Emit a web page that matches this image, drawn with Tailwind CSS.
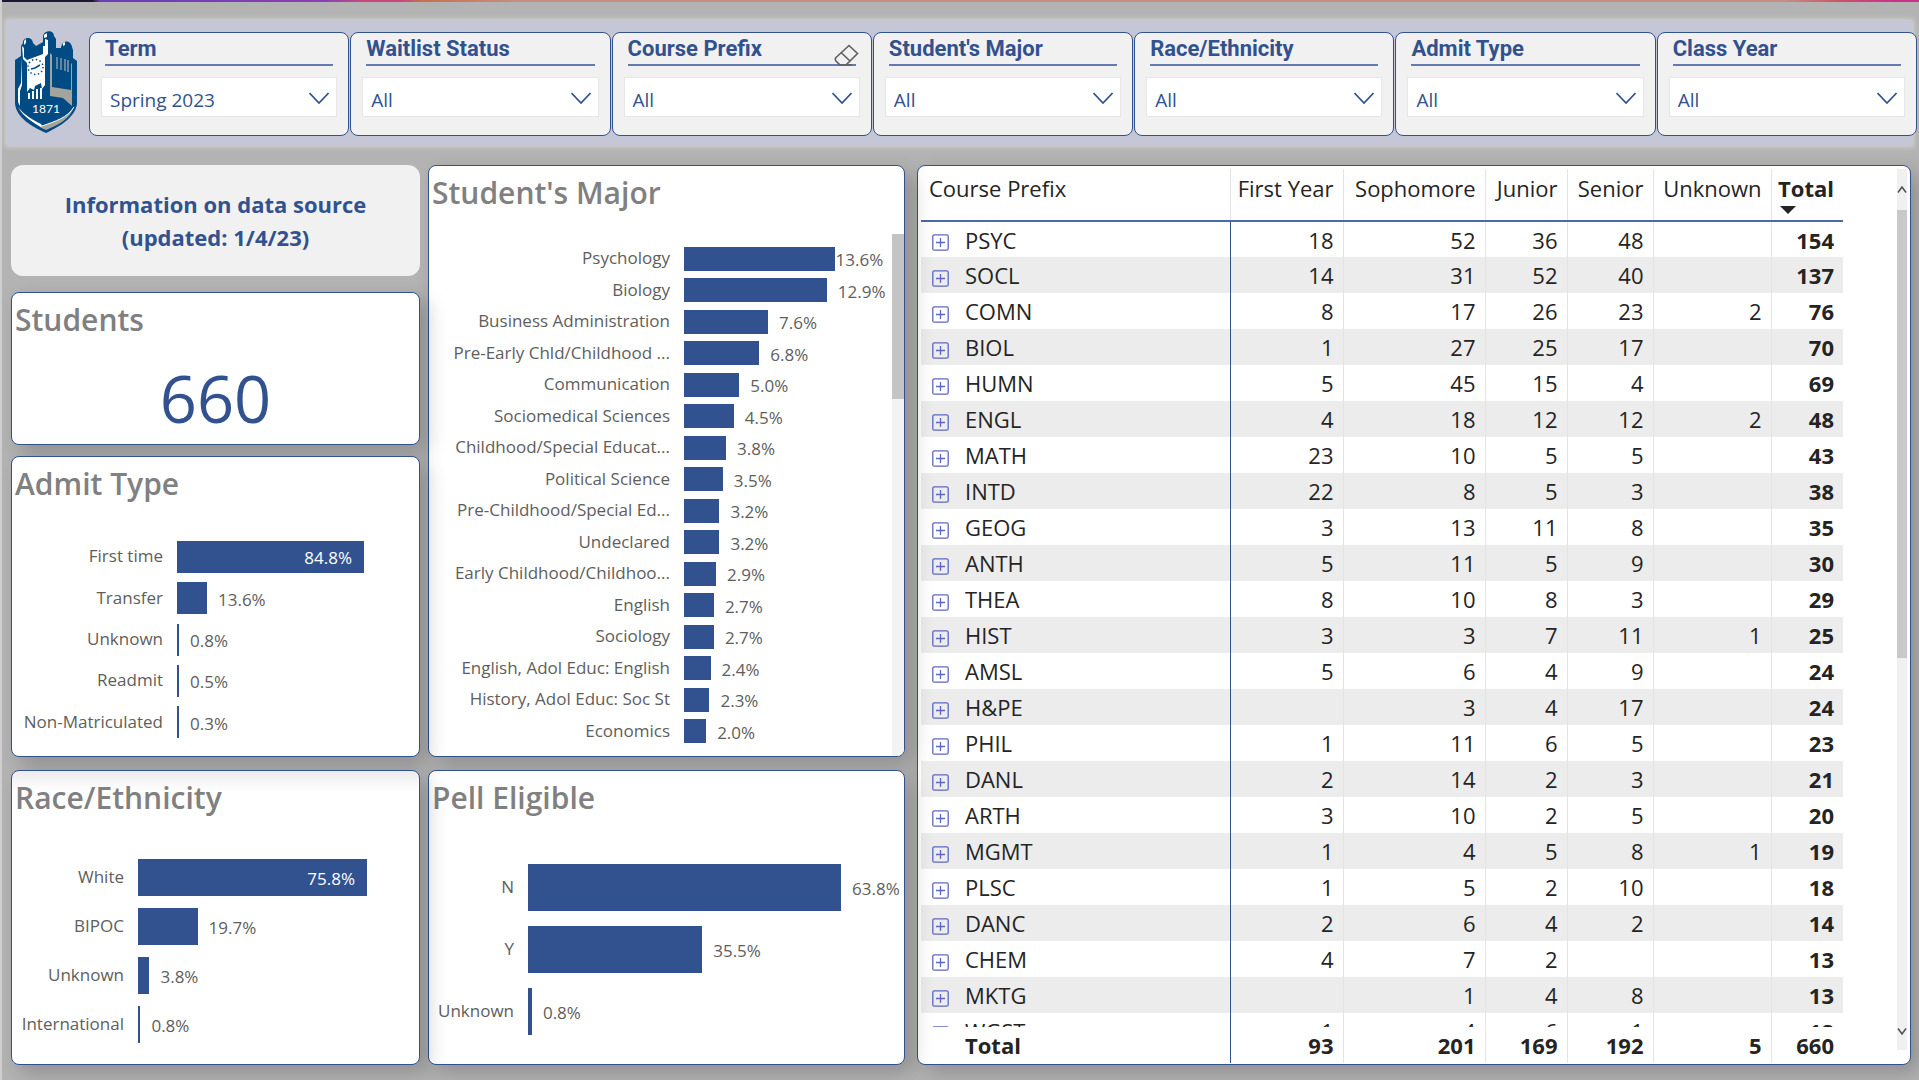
<!DOCTYPE html>
<html lang="en">
<head>
<meta charset="utf-8">
<title>Course Waitlist Dashboard</title>
<script src="https://cdn.jsdelivr.net/npm/@tailwindcss/browser@4"></script>
</head>
<body class="min-h-screen overflow-x-hidden border-l-2 border-[#cfcfcf] bg-[#b3b3b3] font-['Open_Sans','Noto_Sans',sans-serif] text-[#252423]">
<div class="-ml-[2px] h-[2px] bg-[linear-gradient(90deg,#1e1733_0_4.8%,#6a3fb5_5.2%,#8a3fb5_17%,#c8487c_18.8%,#c8487c_21%,#c8704f_22%,#c58f7e_27%,#c58f7e_93%,#c8506a_96%,#c8308c_99%)]"></div>

<header class="mt-[19px] mr-[7px] ml-[5px] flex h-[124px] bg-[#c5c6d6] shadow-[0_0_5px_2px_rgba(214,214,214,0.9)]">
  <div class="w-[82px] shrink-0 pt-[10px] pl-[7px]">
    <svg width="64" height="102" viewBox="0 0 64 102" role="img" aria-label="College logo, 1871">
      <path fill="#004b84" d="M1 29 L7 25 V15 L9 12 C8 7 18 4 19 12 L22 15 L29 11 V6 C29 -1 40 -2 40 5 L42 8 V17 L47 17 C48 8 57 9 58 16 L59 19 V27 L63 30 V73 C61 86 47 95 32 102 C17 95 3 87 1 73 Z"/>
      <path fill="#fff" d="M8 15 L10 17 V26 L13 29 L29 23 V15 L31 15 V8 L34 9 V23 L31 26 V54 L28 58 L27 52 L21 55 L20 59 L16 57 L13 61 V32 L9 28 Z"/>
      <path fill="#fff" d="M8 26 V54 L6 60 V75 L4 71 V58 L7 52 Z M10 10 L12 8 V12 L10 14 Z M30 4 L33 2 V6 L30 7 Z M49 12 L51 11 V14 L49 15 Z"/>
      <path stroke="#004b84" stroke-width="1.6" d="M16 19 V23 M19.500 18 V22 M23 17 V21 M26.500 16 V20" fill="none"/>
      <circle cx="21.500" cy="36" r="7.500" fill="none" stroke="#004b84" stroke-width="1.500" stroke-dasharray="1.500 2.430"/>
      <path d="M17 38 L21 37 L26 34" stroke="#004b84" stroke-width="1.500" fill="none"/>
      <path d="M15 62 V68 M19 60 V68 M23 58 V68 M27 57 V68" stroke="#fff" stroke-width="2" fill="none"/>
      <path d="M43 26 V38 M47 27 V39 M51 28 V40 M54 29 V41" stroke="#9aa5ad" stroke-width="1.300" fill="none"/>
      <path fill="#a3a49c" d="M36 22 L38 24 V56 L57 59 V32 L58 33 V75 L49 67 L36 65 Z"/>
      <path fill="#fff" d="M4 76 C9 86 20 92 30 98 L27 93 C19 89 10 84 4 76 Z"/>
      <path fill="#a3a49c" d="M60 76 C54 86 43 90 26 96 L32 99 C44 94 56 88 60 76 Z"/>
      <path fill="none" stroke="#fff" stroke-width="1" d="M60 76 C53 87 42 90 28 95"/>
      <text x="32" y="82" fill="#fff" font-family="Lato, sans-serif" font-size="12" text-anchor="middle">1871</text>
    </svg>
  </div>
  <div id="slicers" class="-mr-[5px] grid flex-1 grid-cols-7 gap-px pt-[11px] pb-[9px]"></div>
</header>

<main class="mt-5 mr-2 ml-[9px] grid grid-cols-[409fr_477fr_998fr] gap-2 pb-[14px]">
  <section class="relative z-20 flex flex-col">
    <button class="mb-4 h-[111px] rounded-xl bg-[#f1f1f1] text-[22px] leading-[33px] font-bold text-[#31528f]">Information on data source<br>(updated: 1/4/23)</button>
    <div class="mb-[11px] h-[153px] rounded-lg border border-[#31528f] bg-white shadow-[8px_8px_20px_rgba(0,0,0,0.2)]">
      <h2 class="px-[3px] pt-[7px] text-[30px] leading-10 font-semibold text-[#808080]">Students</h2>
      <p class="mt-[18px] text-center text-[65px] leading-[80px] text-[#31528f]">660</p>
    </div>
    <div class="mb-[13px] h-[301px] rounded-lg border border-[#31528f] bg-white shadow-[8px_8px_20px_rgba(0,0,0,0.2)]">
      <h2 class="px-[3px] pt-[7px] text-[30px] leading-10 font-semibold text-[#808080]">Admit Type</h2>
      <div id="admit" class="mt-8 flex h-[207px] flex-col"></div>
    </div>
    <div class="h-[295px] rounded-lg border border-[#31528f] bg-white bg-linear-to-b from-[#ececec] to-white to-[20px] shadow-[8px_8px_20px_rgba(0,0,0,0.2)]">
      <h2 class="px-[3px] pt-[7px] text-[30px] leading-10 font-semibold text-[#808080]">Race/Ethnicity</h2>
      <div id="race" class="mt-[35px] flex h-[196px] flex-col"></div>
    </div>
  </section>

  <section class="relative z-10 flex flex-col">
    <div class="mb-[13px] flex h-[592px] flex-col overflow-hidden rounded-lg border border-[#31528f] bg-white shadow-[8px_8px_20px_rgba(0,0,0,0.2)]">
      <h2 class="px-[3px] pt-[7px] text-[30px] leading-10 font-semibold text-[#808080]">Student's Major</h2>
      <div class="relative mt-[21px] flex-1">
        <div id="major" class="mt-[9px] flex h-[504px] flex-col"></div>
        <div class="absolute inset-y-0 right-0 w-3 bg-[#f3f3f3]"><div class="h-[165px] bg-[#c4c4c4]"></div></div>
      </div>
    </div>
    <div class="h-[295px] rounded-lg border border-[#31528f] bg-white shadow-[8px_8px_20px_rgba(0,0,0,0.2)]">
      <h2 class="px-[3px] pt-[7px] text-[30px] leading-10 font-semibold text-[#808080]">Pell Eligible</h2>
      <div id="pell" class="mt-[38px] flex h-[187px] flex-col"></div>
    </div>
  </section>

  <section class="ml-1 flex h-[900px] rounded-lg border border-[#31528f] bg-white pt-[3px] pr-[3px] pl-[3px] shadow-[8px_8px_20px_rgba(0,0,0,0.2)]">
    <div class="mr-[54px] flex flex-1 flex-col">
      <div class="h-[858px] overflow-hidden">
        <table class="w-full table-fixed text-[22px]">
          <colgroup><col><col class="w-[113px]"><col class="w-[142px]"><col class="w-[82px]"><col class="w-[86px]"><col class="w-[118px]"><col class="w-[72px]"></colgroup>
          <thead>
            <tr class="h-[52px] border-b-2 border-[#4a69a8] text-right align-top leading-[38px] whitespace-nowrap">
              <th class="border-r border-[#e4e4e4] pl-2 text-left font-normal">Course Prefix</th>
              <th class="border-r border-[#e4e4e4] pr-[9px] font-normal">First Year</th>
              <th class="border-r border-[#e4e4e4] pr-[9px] font-normal">Sophomore</th>
              <th class="border-r border-[#e4e4e4] pr-[9px] font-normal">Junior</th>
              <th class="border-r border-[#e4e4e4] pr-[9px] font-normal">Senior</th>
              <th class="border-r border-[#e4e4e4] pr-[9px] font-normal">Unknown</th>
              <th class="relative pr-[9px] font-bold">Total<svg class="absolute bottom-[6px] left-2" width="16" height="8" viewBox="0 0 16 8"><path d="M0 0H16L8 8Z" fill="#252423"/></svg></th>
            </tr>
          </thead>
          <tbody id="rows"></tbody>
        </table>
      </div>
      <table class="w-full table-fixed text-[22px]">
        <colgroup><col><col class="w-[113px]"><col class="w-[142px]"><col class="w-[82px]"><col class="w-[86px]"><col class="w-[118px]"><col class="w-[72px]"></colgroup>
        <tbody>
          <tr class="h-9 text-right leading-8 font-bold">
            <th class="border-r border-[#31528f] pl-11 text-left">Total</th>
            <td class="border-r border-[#e4e4e4] pr-[9px]">93</td>
            <td class="border-r border-[#e4e4e4] pr-[9px]">201</td>
            <td class="border-r border-[#e4e4e4] pr-[9px]">169</td>
            <td class="border-r border-[#e4e4e4] pr-[9px]">192</td>
            <td class="border-r border-[#e4e4e4] pr-[9px]">5</td>
            <td class="pr-[9px]">660</td>
          </tr>
        </tbody>
      </table>
    </div>
    <div class="flex h-[881px] w-[10px] flex-col items-center bg-[#f0f0f0]">
      <svg class="my-4 shrink-0" width="10" height="9" viewBox="0 0 10 9"><path d="M1 7.500 L5 2 L9 7.500" fill="none" stroke="#505050" stroke-width="1.500"/></svg>
      <div class="h-[448px] w-full bg-[#c9c9c9]"></div>
      <svg class="mt-auto mb-[14px] shrink-0" width="10" height="9" viewBox="0 0 10 9"><path d="M1 1.500 L5 7 L9 1.500" fill="none" stroke="#505050" stroke-width="1.500"/></svg>
    </div>
  </section>
</main>

<script>
const eraser = '<button class="absolute top-[11px] right-3" aria-label="Clear selections"><svg width="25" height="22" viewBox="0 0 25 22" fill="none" stroke="#605e5c" stroke-width="1.600"><path d="M15 1.500 L23.500 9.500 L12 21 H6 L2 17 Q0.500 15 2 13.500 Z M7 8.500 L16 17 M5 21 H18"/></svg></button>';
const slicers = [['Term','Spring 2023'],['Waitlist Status','All'],['Course Prefix','All'],["Student's Major",'All'],['Race/Ethnicity','All'],['Admit Type','All'],['Class Year','All']];
document.getElementById('slicers').innerHTML = slicers.map(([title, value], i) => `
  <div class="relative h-[104px] rounded-lg border border-[#31528f] bg-[#f1f1f1] px-[11px]">
    <label for="slicer${i}" class="mx-1 block h-[33px] border-b-2 border-[#5f7bb0] font-[Roboto] text-[22px] leading-[31px] font-bold text-[#31528f]">${title}</label>
    ${i === 2 ? eraser : ''}
    <div class="relative mt-[11px]">
      <select id="slicer${i}" class="block h-10 w-full appearance-none border border-[#e6e6e6] bg-white px-2 pt-[6px] text-[19px] text-[#31528f]"><option>${value}</option></select>
      <svg class="pointer-events-none absolute top-[15px] right-2" width="20" height="12" viewBox="0 0 20 12"><path d="M0.500 1 L10 11 L19.500 1" fill="none" stroke="#31528f" stroke-width="1.700"/></svg>
    </div>
  </div>`).join('');

/* k converts a value to a share of the plot's width; label and bar size the label column and the bars */
function chart(id, data, k, label, bar) {
  document.getElementById(id).innerHTML = data.map(([name, v]) => {
    const inside = v > 70, tight = v === 13.6 && id === 'major';
    return `<div class="flex flex-1 items-center text-[17px] leading-6 whitespace-nowrap text-[#605e5c]">
      <span class="${label} shrink-0 pr-[14px] pb-px text-right">${name}</span>
      <div class="flex flex-1 items-center">
        <div class="${bar} flex min-w-[2px] shrink-0 items-center justify-end bg-[#31528f]" style="width:${(v * k).toFixed(2)}%">${inside ? `<span class="pt-[3px] pr-3 text-white">${v.toFixed(1)}%</span>` : ''}</div>
        ${inside ? '' : `<span class="${tight ? 'pl-px' : 'pl-[11px]'} pt-[3px]">${v.toFixed(1)}%</span>`}
      </div></div>`;
  }).join('');
}
chart('admit', [['First time',84.8],['Transfer',13.6],['Unknown',0.8],['Readmit',0.5],['Non-Matriculated',0.3]], 0.911, 'w-[165px]', 'h-8');
chart('race', [['White',75.8],['BIPOC',19.7],['Unknown',3.8],['International',0.8]], 1.075, 'w-[126px]', 'h-[37px]');
chart('pell', [['N',63.8],['Y',35.5],['Unknown',0.8]], 1.305, 'w-[99px]', 'h-[47px]');
chart('major', [['Psychology',13.6],['Biology',12.9],['Business Administration',7.6],['Pre-Early Chld/Childhood ...',6.8],['Communication',5.0],['Sociomedical Sciences',4.5],['Childhood/Special Educat...',3.8],['Political Science',3.5],['Pre-Childhood/Special Ed...',3.2],['Undeclared',3.2],['Early Childhood/Childhoo...',2.9],['English',2.7],['Sociology',2.7],['English, Adol Educ: English',2.4],['History, Adol Educ: Soc St',2.3],['Economics',2.0]], 5.03, 'w-[255px]', 'h-6');

const rows = `PSYC,18,52,36,48,,154
SOCL,14,31,52,40,,137
COMN,8,17,26,23,2,76
BIOL,1,27,25,17,,70
HUMN,5,45,15,4,,69
ENGL,4,18,12,12,2,48
MATH,23,10,5,5,,43
INTD,22,8,5,3,,38
GEOG,3,13,11,8,,35
ANTH,5,11,5,9,,30
THEA,8,10,8,3,,29
HIST,3,3,7,11,1,25
AMSL,5,6,4,9,,24
H&amp;PE,,3,4,17,,24
PHIL,1,11,6,5,,23
DANL,2,14,2,3,,21
ARTH,3,10,2,5,,20
MGMT,1,4,5,8,1,19
PLSC,1,5,2,10,,18
DANC,2,6,4,2,,14
CHEM,4,7,2,,,13
MKTG,,1,4,8,,13
WGST,1,4,6,1,,12`.split('\n').map(r => r.split(','));
const plus = '<svg width="17" height="17" viewBox="0 0 17 17" fill="none" stroke="#5c67c3" stroke-width="1.300"><rect x="0.800" y="0.800" width="15.400" height="15.400" rx="1.500"/><path d="M8.500 4V13M4 8.500H13"/></svg>';
document.getElementById('rows').innerHTML = rows.map(r => `
  <tr class="h-9 text-right leading-8 even:bg-[#ececec]">
    <th class="border-r border-[#31528f] py-0 pl-[11px] font-normal"><div class="flex items-center gap-4"><button class="pt-[6px]" aria-label="Expand ${r[0]}">${plus}</button><span>${r[0]}</span></div></th>
    ${r.slice(1).map((v, i) => `<td class="${i === 5 ? 'pr-[9px] font-bold' : 'border-r border-[#e4e4e4] pr-[9px]'}">${v}</td>`).join('')}
  </tr>`).join('');
</script>
</body>
</html>
